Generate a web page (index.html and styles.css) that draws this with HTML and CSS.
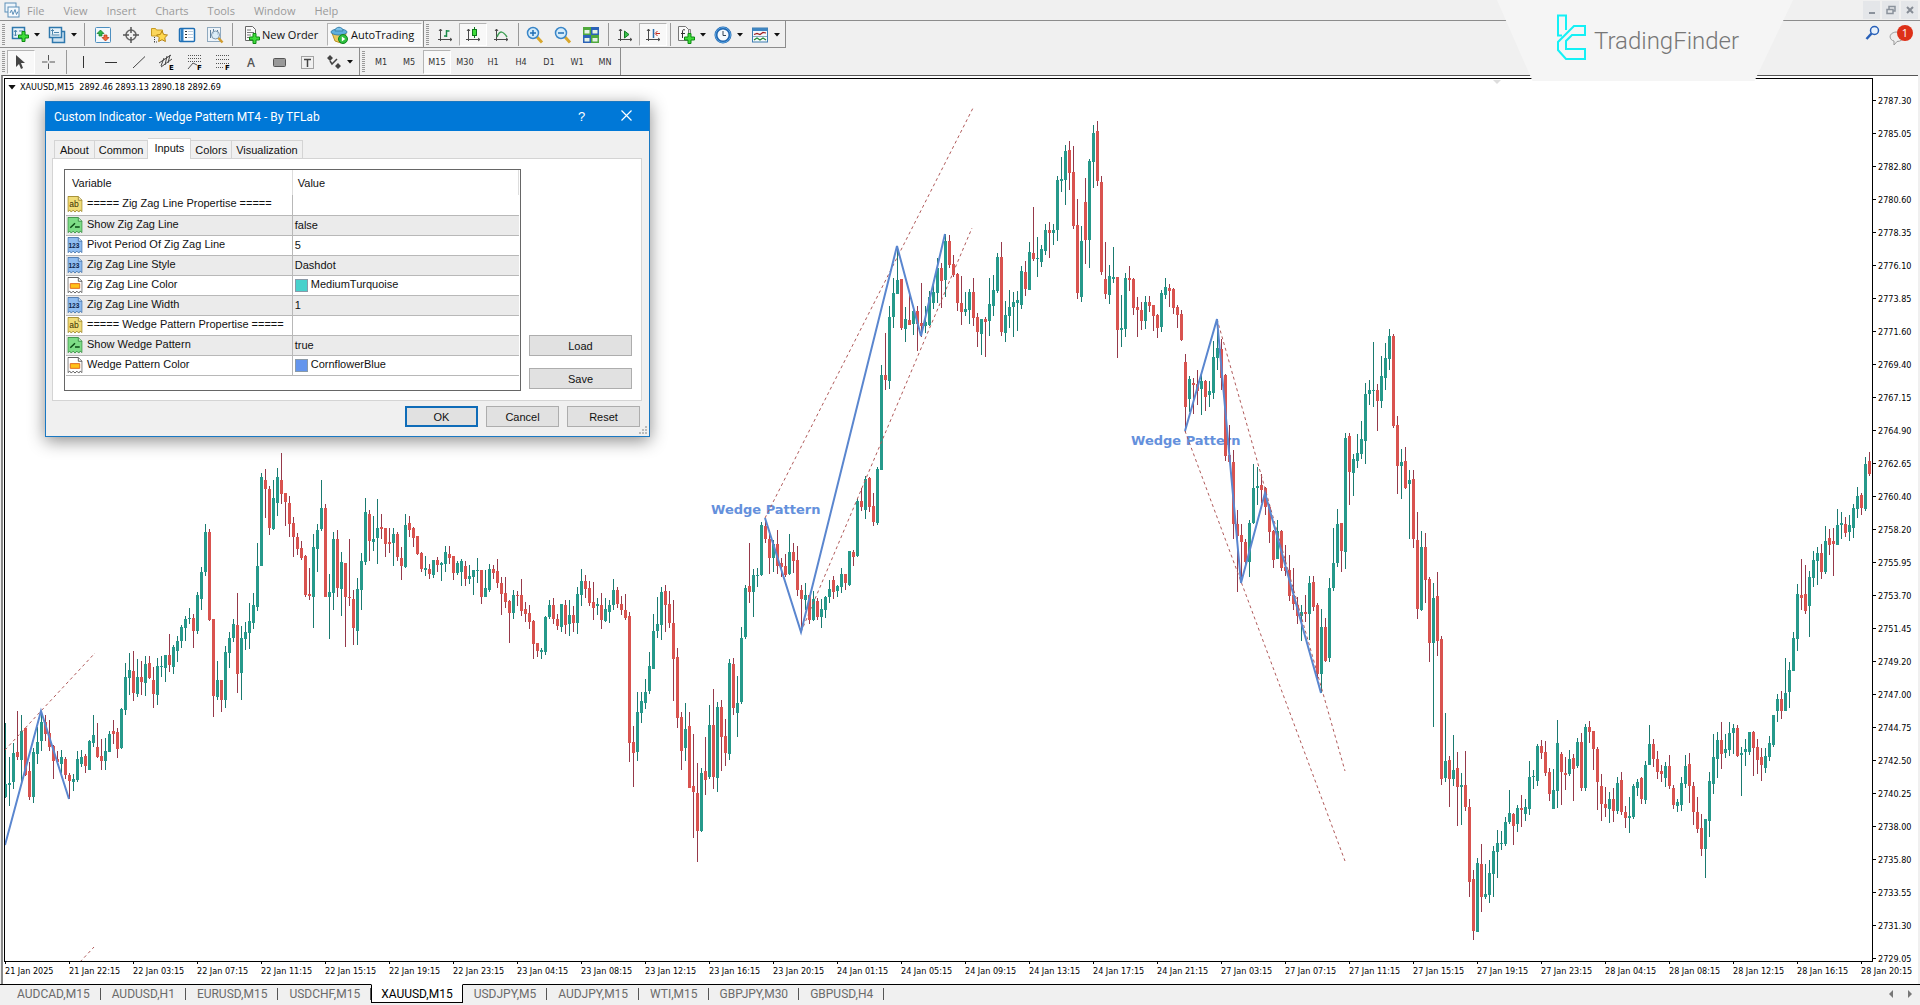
FILE: index.html
```html
<!DOCTYPE html>
<html lang="en">
	<head>
		<meta charset="utf-8">
		<meta name="viewport" content="width=device-width, initial-scale=1.0">
		<title>XAUUSD,M15</title>
		<link rel="stylesheet" href="styles.css">
	</head>
	<body>
		<!-- shared icons -->
		<svg class="defs" width="0" height="0" aria-hidden="true">
			<symbol id="i-drop" viewBox="0 0 6 4"><path d="M0 0h6L3 3.5z" fill="#111"/></symbol>
			<symbol id="i-plus" viewBox="0 0 11 11"><path d="M4 .5h3V4h3.500v3H7v3.500H4V7H.5V4H4z" fill="#3fdc3a" stroke="#0d8a12"/></symbol>
			<symbol id="i-axes" viewBox="0 0 16 16"><path d="M3.500 2v12M1 12.500h14M2 4l1.500-2L5 4M13 11l2 1.500-2 1.500" fill="none" stroke="#4a4a4a"/></symbol>
			<symbol id="i-page" viewBox="0 0 16 18"><path d="M.5.5h11l4 4v12l-2-1.500-1.500 2-2-2-2 2-2-2-2 2-1.500-2-2 1.500z"/><path d="M11.500.5v4h4" fill="#fff" fill-opacity=".6"/></symbol>
			<symbol id="i-ab" viewBox="0 0 16 18"><use href="#i-page" fill="#f0dc78" stroke="#a08a30"/><text x="2" y="12" font-size="9" fill="#3a3000">ab</text></symbol>
			<symbol id="i-bool" viewBox="0 0 16 18"><use href="#i-page" fill="#7ddc86" stroke="#3a8f45"/><path d="M3 11.500l5-5M8 10.500h5" fill="none" stroke="#0b4a14" stroke-width="1.500"/></symbol>
			<symbol id="i-num" viewBox="0 0 16 18"><use href="#i-page" fill="#8fbcf0" stroke="#4a78ac"/><text x="1" y="12" font-size="7" font-weight="bold" fill="#0b2348">123</text></symbol>
			<symbol id="i-col" viewBox="0 0 16 18"><use href="#i-page" fill="#fff" stroke="#555"/><path d="M3 7h10v5H3z" fill="#ffc21a" stroke="#e0661a"/></symbol>
		</svg>

		<nav class="menubar">
			<svg class="app-icon" width="16" height="16" viewBox="0 0 16 16"><rect x="1" y="1" width="11" height="9" fill="#eef5fb" stroke="#5d8fb8"/><rect x="4" y="5" width="11" height="10" fill="#f6fafd" stroke="#5d8fb8"/><path d="M6 11l1.500-3L9 12.500l2-5 1.500 5 1.500-3" fill="none" stroke="#5d8fb8"/></svg>
			<button>File</button>
			<button>View</button>
			<button>Insert</button>
			<button>Charts</button>
			<button>Tools</button>
			<button>Window</button>
			<button>Help</button>
			<div class="window-buttons">
				<button aria-label="Minimize"><svg width="10" height="10" viewBox="0 0 10 10"><path d="M2 8h6" stroke="#8b929c" stroke-width="2"/></svg></button>
				<button aria-label="Restore"><svg width="10" height="10" viewBox="0 0 10 10"><path d="M3 4V1.500h6V6H7M1 4.500h6v4H1z" fill="none" stroke="#8b929c" stroke-width="1.500"/></svg></button>
				<button aria-label="Close"><svg width="10" height="10" viewBox="0 0 10 10"><path d="M2 2l6 6M8 2L2 8" stroke="#868c95" stroke-width="2"/></svg></button>
			</div>
		</nav>

		<div class="toolbar">
			<div class="group">
				<span class="grip"></span>
				<button class="tool drop" aria-label="New chart"><svg width="18" height="18" viewBox="0 0 18 18"><path d="M1.500 1.500h12v11h-12z" fill="#e9f3fa" stroke="#2f78ad" stroke-width="1.500"/><path d="M4.500 4v6M3 6l1.500-2L6 6M3 8.500L4.500 10 6 8.500M8 5h4" fill="none" stroke="#4d86ad"/><use href="#i-plus" x="7" y="5" width="11" height="11"/></svg><svg width="6" height="4"><use href="#i-drop"/></svg></button>
				<button class="tool drop" aria-label="Profiles"><svg width="18" height="18" viewBox="0 0 18 18"><path d="M4.500 5.500h12v11h-12z" fill="#cfe3f2" stroke="#2f78ad" stroke-width="1.500"/><path d="M1.500 1.500h12v10h-12z" fill="#e9f3fa" stroke="#2f78ad" stroke-width="1.500"/><path d="M4.500 3.500v5M3.500 9h8M3 5l1.500-1.500L6 5M6 6.500h5" fill="none" stroke="#4d86ad"/></svg><svg width="6" height="4"><use href="#i-drop"/></svg></button>
				<span class="sep sep-wide"></span>
				<button class="tool" aria-label="Market Watch"><svg width="18" height="18" viewBox="0 0 18 18"><rect x="1.500" y="1.500" width="15" height="15" rx="1" fill="#f2f8fc" stroke="#4d8fc0"/><path d="M3 7.500L6.500 4 10 7.500H8v2.500H5V7.500z" fill="#2db84a" stroke="#0f7a25" stroke-width=".7"/><path d="M8 11.500L11.500 15 15 11.500h-2V9h-3v2.500z" fill="#f26a3c" stroke="#b53312" stroke-width=".7"/></svg></button>
				<button class="tool" aria-label="Data Window"><svg width="18" height="18" viewBox="0 0 18 18"><circle cx="9" cy="9" r="5" fill="none" stroke="#666" stroke-width="1.500"/><path d="M9 1v6M9 11v6M1 9h6M11 9h6" stroke="#555" stroke-width="1.500"/></svg></button>
				<button class="tool" aria-label="Navigator"><svg width="18" height="18" viewBox="0 0 18 18"><path d="M1.500 2.500h4l1 1.500h6v6h-11z" fill="#fbd65c" stroke="#c79a22"/><path d="M4.500 11v5M4 16h4" stroke="#444" stroke-dasharray="1 1"/><path d="M12 5l1.700 3.500 3.800.5-2.700 2.700.6 3.800-3.400-1.800-3.400 1.800.6-3.800L6.500 9l3.800-.5z" fill="#ffd94f" stroke="#b58212"/></svg></button>
				<button class="tool" aria-label="Terminal"><svg width="18" height="18" viewBox="0 0 18 18"><rect x="1.500" y="2.500" width="15" height="13" rx="1" fill="#fff" stroke="#1f6fb5" stroke-width="1.500"/><path d="M4 3v12" stroke="#2f7fc2" stroke-width="3"/><path d="M7 5.500h2M7 8.500h2M7 11.500h2" stroke="#333"/><path d="M10 5.500h5M10 8.500h5M10 11.500h5" stroke="#b9cde0"/></svg></button>
				<button class="tool" aria-label="Strategy Tester"><svg width="18" height="18" viewBox="0 0 18 18"><rect x="1.500" y="1.500" width="13" height="14" fill="#eef4f9" stroke="#8fa9bf"/><path d="M4.500 4v8M7.500 3v5M11.500 4v5" stroke="#5c7f9e"/><circle cx="9.500" cy="9" r="4" fill="#d7ebf7" fill-opacity=".8" stroke="#7f97aa"/><path d="M12.500 12l4 4.500" stroke="#d29c2e" stroke-width="2.500"/></svg></button>
				<span class="sep sep-wide"></span>
				<button class="tool text new-order"><svg width="18" height="18" viewBox="0 0 18 18"><path d="M2.500.5h7l3 3v11h-10z" fill="#fafafa" stroke="#666"/><path d="M4 4h4M4 6.500h7M4 9h4M4 11.500h3" stroke="#777"/><use href="#i-plus" x="6" y="7" width="11" height="11"/></svg>New Order</button>
				<button class="tool text auto pressed"><svg width="18" height="18" viewBox="0 0 18 18"><path d="M2 7l3 8 6 2 4-4 1-6z" fill="#ecc95d" stroke="#b89022"/><ellipse cx="9" cy="6" rx="8" ry="3" fill="#5fb0dd" stroke="#3d83ad"/><path d="M5 5c0-5 8-5 8 0z" fill="#7cc3ea" stroke="#3d83ad"/><circle cx="13" cy="13" r="4.500" fill="#2fbf3f" stroke="#0e8520"/><path d="M11.800 10.500v5l3.500-2.500z" fill="#fff"/></svg>AutoTrading</button>
			</div>
			<div class="group">
				<span class="grip"></span>
				<button class="tool" aria-label="Bar chart"><svg width="16" height="16"><use href="#i-axes"/><path d="M9.500 3v7M9.500 4h3M7 9h2.500" stroke="#1a8a4a" stroke-width="1.500"/></svg></button>
				<button class="tool pressed" aria-label="Candlesticks"><svg width="16" height="16"><use href="#i-axes"/><path d="M9.500 0v11" stroke="#0f7a1c"/><rect x="7.500" y="2.500" width="4" height="6" fill="#3fdc3a" stroke="#0f7a1c"/></svg></button>
				<button class="tool" aria-label="Line chart"><svg width="16" height="16"><use href="#i-axes"/><path d="M4 10c3-7 6-6 10 0" fill="none" stroke="#3f9f55" stroke-width="1.500"/></svg></button>
				<span class="sep"></span>
				<button class="tool" aria-label="Zoom in"><svg width="18" height="18" viewBox="0 0 18 18"><path d="M11 11l5 5.500" stroke="#d9a72c" stroke-width="3"/><circle cx="7" cy="7" r="5.500" fill="#d5ecfa" stroke="#3a86c8" stroke-width="1.500"/><path d="M4 7h6M7 4v6" stroke="#1f6fb5" stroke-width="1.500"/></svg></button>
				<button class="tool" aria-label="Zoom out"><svg width="18" height="18" viewBox="0 0 18 18"><path d="M11 11l5 5.500" stroke="#d9a72c" stroke-width="3"/><circle cx="7" cy="7" r="5.500" fill="#d5ecfa" stroke="#3a86c8" stroke-width="1.500"/><path d="M4 7h6" stroke="#1f6fb5" stroke-width="1.500"/></svg></button>
				<button class="tool" aria-label="Tile windows"><svg width="18" height="18" viewBox="0 0 18 18"><path d="M1 1h8v8H1zM9 9h8v8H9z" fill="#4fa83c"/><path d="M9 1h8v8H9zM1 9h8v8H1z" fill="#2b62b8"/><path d="M2.500 4h5v3.500h-5zM10.500 4h5v3.500h-5zM2.500 12h5v3.500h-5zM10.500 12h5v3.500h-5z" fill="#e6f2e6"/></svg></button>
				<span class="sep"></span>
				<button class="tool" aria-label="Auto scroll"><svg width="16" height="16"><use href="#i-axes"/><path d="M7.500 4v7l4.500-3.500z" fill="#39c04a" stroke="#147a24"/></svg></button>
				<button class="tool pressed" aria-label="Chart shift"><svg width="16" height="16"><use href="#i-axes"/><path d="M8.500 2v9" stroke="#2a6fae" stroke-width="1.500"/><path d="M15 6.500h-4M12.500 4l-2.500 2.500L12.500 9" fill="none" stroke="#c0281a"/></svg></button>
				<span class="sep"></span>
				<button class="tool drop" aria-label="Indicators"><svg width="18" height="18" viewBox="0 0 18 18"><path d="M4.500 3.500h9v11h-9z" fill="#ddd" stroke="#888"/><path d="M1.500.5h7l3 3v11h-10z" fill="#fafafa" stroke="#777"/><path d="M8 4c-2-1-2.500 0-2.500 2v6M4 7.500h4" fill="none" stroke="#333"/><use href="#i-plus" x="7" y="7" width="11" height="11"/></svg><svg width="6" height="4"><use href="#i-drop"/></svg></button>
				<button class="tool drop" aria-label="Periods"><svg width="18" height="18" viewBox="0 0 18 18"><circle cx="9" cy="9" r="7" fill="#f4f9fd" stroke="#1f66b0" stroke-width="3"/><circle cx="9" cy="9" r="7.500" fill="none" stroke="#5aa3e0"/><path d="M9 5v4.500h3" fill="none" stroke="#345"/></svg><svg width="6" height="4"><use href="#i-drop"/></svg></button>
				<button class="tool drop" aria-label="Templates"><svg width="18" height="18" viewBox="0 0 18 18"><rect x="1.500" y="2" width="15" height="14" fill="#f4f9fd" stroke="#3f7db0"/><path d="M1.500 3.500h15" stroke="#3f86c2" stroke-width="3"/><path d="M2 10.500h14" stroke="#8ab"/><path d="M3 8.500l3-1 3 1 3-2 3 .5" fill="none" stroke="#a02020" stroke-width="1.200"/><path d="M3 14l3-2 3 2 3-2 3 2" fill="none" stroke="#208a30" stroke-width="1.200"/></svg><svg width="6" height="4"><use href="#i-drop"/></svg></button>
			</div>
			<div class="status">
				<button aria-label="Search"><svg width="16" height="16" viewBox="0 0 16 16"><circle cx="9.500" cy="5.500" r="4" fill="#e8f1fb" stroke="#2860b8" stroke-width="1.500"/><path d="M6.500 8.500L1.500 14" stroke="#2860b8" stroke-width="2.500"/></svg></button>
				<button class="messages" aria-label="Messages"><svg width="18" height="16" viewBox="0 0 18 16"><path d="M7 2c-8 1-7 8-2 9v4l3-3.500c8 0 9-9-1-9.500z" fill="#eee" stroke="#999"/></svg><span class="badge">1</span></button>
			</div>
		</div>

		<div class="toolbar last">
			<div class="group">
				<span class="grip"></span>
				<button class="tool pressed" aria-label="Cursor"><svg width="16" height="16"><path d="M3 1v12l3-3 2 5 2-1-2-5h4z" fill="#444"/></svg></button>
				<button class="tool" aria-label="Crosshair"><svg width="16" height="16"><path d="M7.500 1v5.500M7.500 9.500V15M1 8h5.500M8.500 8H14" stroke="#555"/></svg></button>
				<span class="sep"></span>
				<button class="tool" aria-label="Vertical line"><svg width="16" height="16"><path d="M8.500 2v12" stroke="#333"/></svg></button>
				<button class="tool" aria-label="Horizontal line"><svg width="16" height="16"><path d="M2 8.500h12" stroke="#333"/></svg></button>
				<button class="tool" aria-label="Trendline"><svg width="16" height="16"><path d="M2 14L14 2.500" stroke="#444"/></svg></button>
				<button class="tool" aria-label="Equidistant channel"><svg width="16" height="17"><path d="M0 9L12 1M2 13L13 5M2 12L5 4M6 11L8 2M9 9l2-8" fill="none" stroke="#444"/><text x="10" y="16" class="tiny">E</text></svg></button>
				<button class="tool" aria-label="Fibonacci fan"><svg width="16" height="17"><path d="M1 1.500h14M1 4.500h14M1 7.500h14" stroke="#555" stroke-dasharray="1 1"/><path d="M1 15l5-6 4 2" fill="none" stroke="#555"/><text x="10" y="16" class="tiny">F</text></svg></button>
				<button class="tool" aria-label="Fibonacci retracement"><svg width="16" height="17"><path d="M1 1.500h13M1 5.500h13M1 9.500h13M1 13.500h8" stroke="#555" stroke-dasharray="1 1"/><text x="10" y="16" class="tiny">F</text></svg></button>
				<button class="tool letter">A</button>
				<button class="tool" aria-label="Rectangle"><svg width="16" height="16"><rect x="2.500" y="4.500" width="12" height="8" rx="1" fill="#999" stroke="#555"/></svg></button>
				<button class="tool" aria-label="Text label"><svg width="16" height="16"><rect x="2.500" y="2.500" width="12" height="12" fill="none" stroke="#555" stroke-dasharray="1 1"/><path d="M5 5.500h7M8.500 5v8" stroke="#444" stroke-width="1.500"/></svg></button>
				<button class="tool drop" aria-label="Arrows"><svg width="16" height="16"><path d="M1 4l3-3 3 3-3 3zM9 12l3-3 3 3-3 3z" fill="#444"/><path d="M4 7l2 3 5-5" fill="none" stroke="#444" stroke-width="1.500"/></svg><svg width="6" height="4"><use href="#i-drop"/></svg></button>
			</div>
			<div class="group">
				<span class="grip"></span>
				<button class="tool tf">M1</button>
				<button class="tool tf">M5</button>
				<button class="tool tf pressed">M15</button>
				<button class="tool tf">M30</button>
				<button class="tool tf">H1</button>
				<button class="tool tf">H4</button>
				<button class="tool tf">D1</button>
				<button class="tool tf">W1</button>
				<button class="tool tf">MN</button>
			</div>
		</div>

		<main class="chart">
			<div class="plot">
				<p class="quote"><svg width="8" height="5" viewBox="0 0 6 4"><use href="#i-drop"/></svg>XAUUSD,M15&nbsp; 2892.46 2893.13 2890.18 2892.69</p>
				<svg class="canvas" id="canvas">
					<g transform="translate(-5 -79)">
						<path d="M1493 80h8l-4 4z" fill="#ddd"/>
						<text class="wedge-name" x="711" y="514">Wedge Pattern</text>
						<text class="wedge-name" x="1131" y="445">Wedge Pattern</text>
						<g id="bars" shape-rendering="crispEdges"></g>
						<g class="trend">
							<path d="M5 750L41 711L95 653"/>
							<path d="M80 962L94 947"/>
							<path d="M765 518L973 108"/>
							<path d="M801 632L972 228"/>
							<path d="M1217 319L1345 771"/>
							<path d="M1185 431L1345 861"/>
						</g>
						<g class="wedge">
							<path d="M5 845L41 711L69 799"/>
							<path d="M765 518L801 632L897 246L921 336L945 234"/>
							<path d="M1185 431L1217 319L1241 583L1265 493L1321 693"/>
						</g>
					</g>
				</svg>
			</div>
			<ol class="prices" id="prices"></ol>
			<ol class="times" id="times"></ol>
		</main>

		<div class="chart-tabs">
			<button>AUDCAD,M15</button>
			<button>AUDUSD,H1</button>
			<button>EURUSD,M15</button>
			<button>USDCHF,M15</button>
			<button class="active">XAUUSD,M15</button>
			<button>USDJPY,M5</button>
			<button>AUDJPY,M15</button>
			<button>WTI,M15</button>
			<button>GBPJPY,M30</button>
			<button>GBPUSD,H4</button>
			<div class="scroll">
				<button aria-label="Scroll left"><svg width="4" height="8"><path d="M4 0v8L0 4z" fill="#777"/></svg></button>
				<button aria-label="Scroll right"><svg width="4" height="8"><path d="M0 0v8l4-4z" fill="#777"/></svg></button>
			</div>
		</div>

		<div class="brand">
			<svg width="31" height="47" viewBox="0 0 31 47"><path d="M6 21.500H2V1.500h8V16M29 12H18L2 28v8l8 9h19V35H10v-8l6-6h13z" fill="none" stroke="#14f0f5" stroke-width="2"/></svg>
			<span>TradingFinder</span>
		</div>

		<section class="dialog" role="dialog" aria-labelledby="dialog-title">
			<header>
				<h1 id="dialog-title">Custom Indicator - Wedge Pattern MT4 - By TFLab</h1>
				<button class="help">?</button>
				<button aria-label="Close"><svg width="11" height="11" viewBox="0 0 11 11"><path d="M.5.5l10 10M10.500.5l-10 10" stroke="#fff" stroke-width="1.200"/></svg></button>
			</header>
			<div class="tabs">
				<button>About</button>
				<button>Common</button>
				<button class="active">Inputs</button>
				<button>Colors</button>
				<button>Visualization</button>
			</div>
			<div class="panel">
				<div class="grid">
					<table>
						<thead>
							<tr><th>Variable</th><th>Value</th></tr>
						</thead>
						<tbody>
							<tr><td><svg><use href="#i-ab"/></svg>===== Zig Zag Line Propertise =====</td><td></td></tr>
							<tr><td><svg><use href="#i-bool"/></svg>Show Zig Zag Line</td><td>false</td></tr>
							<tr><td><svg><use href="#i-num"/></svg>Pivot Period Of Zig Zag Line</td><td>5</td></tr>
							<tr><td><svg><use href="#i-num"/></svg>Zig Zag Line Style</td><td>Dashdot</td></tr>
							<tr><td><svg><use href="#i-col"/></svg>Zig Zag Line Color</td><td><i class="swatch turquoise"></i>MediumTurquoise</td></tr>
							<tr><td><svg><use href="#i-num"/></svg>Zig Zag Line Width</td><td>1</td></tr>
							<tr><td><svg><use href="#i-ab"/></svg>===== Wedge Pattern Propertise =====</td><td></td></tr>
							<tr><td><svg><use href="#i-bool"/></svg>Show Wedge Pattern</td><td>true</td></tr>
							<tr><td><svg><use href="#i-col"/></svg>Wedge Pattern Color</td><td><i class="swatch cornflower"></i>CornflowerBlue</td></tr>
						</tbody>
					</table>
				</div>
				<div class="side">
					<button class="btn">Load</button>
					<button class="btn">Save</button>
				</div>
			</div>
			<footer>
				<button class="btn default">OK</button>
				<button class="btn">Cancel</button>
				<button class="btn">Reset</button>
			</footer>
			<svg class="resize" width="8" height="8"><path d="M6 0h2v2H6zM3 3h2v2H3zM6 3h2v2H6zM0 6h2v2H0zM3 6h2v2H3zM6 6h2v2H6z" fill="#bbb"/></svg>
		</section>

		<script src="chart.js"></script>
	</body>
</html>
```
FILE: styles.css
```css
* {
	box-sizing: border-box;
}
body {
	margin: 0;
	height: 100vh;
	display: flex;
	flex-direction: column;
	overflow: hidden;
	background: #f0f0f0;
	font-family: "Open Sans", sans-serif;
	font-size: 11px;
	color: #111;
}
button {
	margin: 0;
	padding: 0;
	border: none;
	background: none;
	font: inherit;
	color: inherit;
}
ol {
	margin: 0;
	padding: 0;
	list-style: none;
}
.defs {
	display: none;
}

/* menu and toolbars */
.menubar {
	display: flex;
	align-items: center;
	gap: 19px;
	flex: none;
	height: 21px;
	padding-left: 4px;
	border-bottom: 1px solid #8c8c8c;
	color: #9a9a9a;
}
.app-icon {
	margin-right: -12px;
}
.window-buttons {
	display: flex;
	gap: 2px;
	margin-left: auto;
	padding-right: 2px;
}
.window-buttons button {
	width: 17px;
	height: 18px;
	background: #e4e6e9;
}
.toolbar {
	display: flex;
	flex: none;
	height: 27px;
}
.group {
	display: flex;
	border-right: 1px solid #8c8c8c;
	border-bottom: 1px solid #8c8c8c;
	padding-right: 1px;
}
.last .group {
	border-bottom: none;
}
.grip {
	width: 3px;
	margin: 3px 2px 2px;
	background: repeating-linear-gradient(#999 0 1px, transparent 1px 2px);
}
.sep {
	width: 6px;
	margin: 2px 0 1px;
	background: linear-gradient(90deg, transparent 3px, #999 3px 4px, transparent 4px);
}
.sep-wide {
	width: 8px;
}
.tool {
	display: flex;
	align-items: center;
	justify-content: center;
	width: 28px;
	margin: 2px 0 1px;
}
.drop {
	width: 37px;
	gap: 5px;
}
.pressed {
	border: 1px solid #b4b4b4;
	border-right-color: #fff;
	border-bottom-color: #fff;
	background: #f8f8f8;
}
.text {
	justify-content: flex-start;
	font-size: 11px;
}
.new-order {
	width: 90px;
	padding-left: 6px;
	gap: 1px;
}
.auto {
	width: 95px;
	padding-left: 2px;
	gap: 3px;
}
.letter {
	font-weight: 600;
	font-size: 12px;
	color: #555;
}
.tf {
	font-family: "DejaVu Sans Condensed", "DejaVu Sans", sans-serif;
	font-size: 9px;
	color: #333;
}
.tiny {
	font: bold 7px "DejaVu Sans", sans-serif;
}
.status {
	display: flex;
	align-items: center;
	gap: 8px;
	margin-left: auto;
	padding-right: 7px;
}
.messages {
	position: relative;
	width: 24px;
	height: 26px;
	padding-top: 8px;
	text-align: left;
}
.badge {
	position: absolute;
	top: 3px;
	right: 0;
	width: 16px;
	height: 16px;
	border-radius: 8px;
	background: #dd3018;
	color: #fff;
	font-size: 11px;
	line-height: 16px;
	text-align: center;
}

/* chart window */
.chart {
	display: grid;
	grid-template-columns: minmax(0, 1fr) 45px;
	grid-template-rows: minmax(0, 1fr) 22px;
	flex: 1;
	min-height: 0;
	margin: 0 2px 0 1px;
	padding: 2px 0 0 1px;
	border-top: 1px solid #555;
	border-left: 2px solid #888;
	background: #fff;
	font-family: "DejaVu Sans Condensed", "DejaVu Sans", sans-serif;
	font-size: 9px;
	color: #000;
}
.plot {
	position: relative;
	border: 1px solid #000;
}
.canvas {
	display: block;
	width: 100%;
	height: 100%;
}
.quote {
	position: absolute;
	top: 2px;
	left: 3px;
	display: flex;
	align-items: center;
	gap: 4px;
	margin: 0;
	line-height: 12px;
}
.up {
	fill: #26998b;
}
.up .wick {
	fill: #1a7a70;
}
.down {
	fill: #d9534f;
}
.down .wick {
	fill: #96394a;
}
.wedge {
	fill: none;
	stroke: #5a86cf;
	stroke-width: 2;
}
.trend {
	fill: none;
	stroke: #b05a5a;
	stroke-dasharray: 3 3;
}
.wedge-name {
	font: bold 13px "DejaVu Sans", sans-serif;
	fill: #6490dc;
}
.prices {
	padding-top: 6px;
	height: 0;
}
.prices li {
	display: flex;
	align-items: center;
	gap: 2px;
	height: 33px;
}
.prices li::before {
	content: "";
	width: 3px;
	height: 1px;
	background: #000;
}
.times {
	display: flex;
	padding-left: 1px;
}
.times li {
	flex: none;
	width: 64px;
	white-space: nowrap;
	line-height: 14px;
}
.times li::before {
	content: "";
	display: block;
	width: 1px;
	height: 2px;
	background: #000;
}

.chart-tabs {
	display: flex;
	flex: none;
	height: 21px;
	padding: 0 8px 2px 6px;
	border-top: 1px solid #000;
	font-family: Roboto, sans-serif;
	font-size: 12px;
	color: #6a6a6a;
}
.chart-tabs > button {
	position: relative;
	padding: 0 11px;
}
.chart-tabs > button::after {
	content: "";
	position: absolute;
	right: 0;
	top: 3px;
	bottom: 3px;
	width: 1px;
	background: #555;
}
.chart-tabs > .active {
	margin-top: -1px;
	padding: 0 9px;
	border: 1px solid #000;
	border-top-color: #fff;
	background: #fff;
	color: #000;
}
.chart-tabs > .active::after {
	display: none;
}
.scroll {
	display: flex;
	align-items: center;
	gap: 15px;
	margin-left: auto;
}
.scroll button {
	display: flex;
}

.brand {
	position: absolute;
	top: 0;
	right: 127px;
	display: flex;
	align-items: center;
	gap: 7px;
	width: 296px;
	height: 81px;
	padding: 0 0 6px 59px;
	background: #f5f5f5;
	clip-path: polygon(0 0, 100% 0, 87% 100%, 12% 100%);
	font: 300 24px Roboto, sans-serif;
	color: #777;
}
.brand span {
	padding-top: 6px;
}

/* indicator dialog */
.dialog {
	position: absolute;
	left: 45px;
	top: 101px;
	width: 605px;
	border: 1px solid #1a78c2;
	background: #f0f0f0;
	box-shadow: 0 4px 16px rgba(0, 0, 0, .45);
	font-family: "Liberation Sans", sans-serif;
	font-size: 11px;
	color: #111;
}
.dialog header {
	display: flex;
	align-items: center;
	height: 29px;
	padding-left: 8px;
	background: #0078d7;
	color: #fff;
}
.dialog h1 {
	flex: 1;
	margin: 0;
	font: 12px Roboto, sans-serif;
}
.dialog header button {
	width: 45px;
}
.help {
	font-size: 13px;
}
.tabs {
	display: flex;
	align-items: flex-end;
	height: 27px;
	padding-left: 8px;
}
.tabs button {
	height: 18px;
	padding: 1px 4px 0;
	border: 1px solid #d4d4d4;
	border-left: none;
	border-bottom: none;
}
.tabs button:first-child {
	padding: 1px 5px 0;
	border-left: 1px solid #d4d4d4;
}
.tabs .active {
	height: 21px;
	padding: 0 6px 2px;
	margin-bottom: -1px;
	background: #fff;
}
.panel {
	display: flex;
	gap: 8px;
	margin: 0 7px 0 6px;
	padding: 10px 9px 9px 11px;
	border: 1px solid #d4d4d4;
	background: #fff;
}
.grid {
	flex: 1;
	height: 222px;
	padding: 0 1px;
	border: 1px solid #666;
}
.grid table {
	width: 100%;
	table-layout: fixed;
	border-collapse: collapse;
}
.grid th {
	height: 25px;
	padding: 1px 6px 0;
	text-align: left;
	font-weight: normal;
}
.grid th + th {
	padding-left: 5px;
	border-left: 1px solid #ddd;
	border-right: 1px solid #ddd;
}
.grid td {
	height: 20px;
	padding: 0 0 0 1px;
	border-bottom: 1px solid #b8b8b8;
	white-space: nowrap;
}
.grid td + td {
	padding-left: 2px;
	border-left: 1px solid #b8b8b8;
}
.grid tr:nth-child(even) td {
	background: #ebebeb;
}
.grid td svg {
	width: 16px;
	height: 17px;
	margin-right: 4px;
	vertical-align: middle;
}
.swatch {
	display: inline-block;
	width: 13px;
	height: 13px;
	margin-right: 3px;
	border: 1px solid #8a9aa8;
	vertical-align: middle;
}
.turquoise {
	background: mediumturquoise;
}
.cornflower {
	background: cornflowerblue;
}
.side {
	display: flex;
	flex-direction: column;
	justify-content: flex-end;
	gap: 12px;
	width: 103px;
	padding-bottom: 2px;
}
.btn {
	height: 21px;
	border: 1px solid #adadad;
	background: #e1e1e1;
}
.default {
	border: 2px solid #0f6cb8;
}
.dialog footer {
	display: flex;
	justify-content: flex-end;
	gap: 8px;
	padding: 5px 9px 9px;
}
.dialog footer .btn {
	width: 73px;
}
.resize {
	position: absolute;
	right: 2px;
	bottom: 2px;
}
```
FILE: chart.js
```js
// bar = direction, high, body top, body bottom, low (window pixels)
const bars = `
u723,784,797,798 u757,783,785,806 u743,753,782,789 d711,752,757,760 u715,731,760,782 d728,728,775,776 d762,771,797,800 u748,752,797,803 u727,742,754,764 u711,722,741,751
d715,722,734,741 d720,733,747,751 d745,746,761,779 d751,759,762,765 u750,757,764,773 d757,759,775,779 d773,775,781,799 u774,779,782,791 u751,759,780,782 u750,757,764,767
d754,756,766,773 u740,741,770,770 u715,735,743,747 d723,747,757,758 d739,756,761,770 u738,751,761,770 u731,734,752,752 d720,731,734,744 d728,732,749,758 u708,709,748,749
u663,677,710,715 u653,670,678,695 d651,671,693,701 u659,677,694,697 d661,677,682,695 u656,664,683,696 d656,663,678,679 d667,680,694,708 u658,666,695,705 u656,666,667,677
u655,655,668,682 d634,655,665,672 u645,647,667,674 u636,641,651,662 u625,627,641,648 u616,619,628,641 u608,618,619,624 d614,618,631,648 u592,595,631,634 u567,572,599,610
u524,532,572,576 d529,532,620,621 d619,619,696,717 u661,680,697,700 d680,680,700,712 u646,652,700,708 u632,638,653,668 u619,624,638,642 d593,625,674,693 u626,638,673,700
u622,632,639,650 u603,621,633,649 u593,605,623,629 u543,566,607,611 u473,477,566,566 d469,480,489,518 d486,489,528,535 u480,498,529,530 u468,477,503,516 d453,480,494,504
d493,493,502,526 d496,503,524,537 d517,523,537,557 d533,537,549,555 d541,548,558,560 d555,556,595,597 d568,594,596,600 u534,547,597,628 u524,530,549,572 u480,508,529,531
d504,508,597,597 u574,592,597,639 u532,539,593,610 d530,539,588,597 u552,562,589,616 d563,563,597,647 d539,597,598,606 d590,599,628,645 u578,589,631,645 u553,561,590,610
u498,512,562,565 d510,514,541,561 u516,539,542,551 u499,528,538,564 d514,527,529,539 d528,528,544,557 d528,542,544,553 u528,534,543,566 d532,534,557,561 d547,558,566,580
u514,525,567,568 d516,523,530,537 d527,528,538,547 d536,536,554,555 d552,553,569,572 u556,568,570,576 d564,569,574,579 u560,560,575,578 d557,560,565,572 u562,563,565,581
u546,552,564,572 d546,554,558,564 d556,556,573,580 u561,563,573,575 u559,561,572,586 d561,566,579,586 u565,576,579,584 u570,570,577,595 u558,570,571,583 d570,570,597,604
u570,588,597,597 u564,569,590,592 d565,569,573,579 d559,571,583,588 d577,583,594,615 d577,593,602,608 d600,601,613,643 u590,595,613,619 d591,595,596,606 d579,595,611,616
d602,609,614,622 d605,613,622,629 d620,621,644,659 d643,643,651,657 u648,650,652,659 u616,617,652,655 u600,605,617,619 d598,605,619,624 d614,619,626,630 u604,604,627,632
d600,605,625,634 u600,615,624,636 d606,615,623,632 u587,594,623,634 u569,581,595,606 d575,581,589,598 d581,588,603,606 d582,602,608,620 u598,604,606,615 d593,605,620,629
u598,609,621,622 u600,605,612,623 u579,590,605,610 d587,590,604,608 d596,604,610,615 d594,610,618,620 d612,616,743,762 d726,742,753,787 u692,712,752,761 u692,701,713,723
u679,692,703,709 u652,666,691,694 u614,631,669,669 u597,624,631,638 u587,592,625,640 d585,591,605,632 d591,604,623,628 d600,623,659,701 d648,657,718,728 d712,717,751,770
u703,729,748,761 d712,726,788,788 d734,786,792,838 d763,793,831,862 u768,773,831,832 d737,771,780,795 u705,725,777,779 d689,725,777,789 u702,707,778,792 d700,707,737,771
d719,736,753,766 u659,663,754,760 d658,664,708,715 u676,703,713,737 u627,638,702,704 u585,588,637,639 d543,586,592,603 u569,575,592,617 u568,575,576,587 u522,525,575,576
d518,526,539,543 d530,539,558,574 u540,544,558,572 d530,544,566,574 d558,563,567,577 d554,566,575,577 u534,552,574,575 d543,552,561,573 d546,560,590,596 d585,590,599,632
u583,595,600,610 d595,595,620,624 u591,599,620,621 d598,601,617,620 u599,609,617,628 u596,597,610,618 u580,589,597,603 d576,580,592,599 u585,586,591,597 u568,574,587,593
d574,574,583,590 u551,551,585,586 d550,552,557,566 u498,501,556,557 d488,501,507,511 u476,479,510,519 d477,478,507,512 d493,506,522,526 u467,469,523,525 u365,375,470,470
d333,375,380,390 u306,317,381,389 u278,293,317,328 u246,280,294,294 d279,279,328,330 u307,319,329,342 d292,320,325,325 u306,311,324,335 d306,311,324,351 d283,323,326,337
u306,322,326,333 u291,297,325,326 u280,292,303,309 u258,268,293,303 d263,268,281,308 u234,241,280,297 d235,241,265,268 d255,264,275,277 d273,274,303,311 d276,303,312,325
u292,309,312,316 u289,292,310,324 d278,292,318,326 d313,317,332,347 u319,319,334,355 d317,319,322,357 u278,304,321,336 u275,290,306,316 u253,257,291,293 d242,257,332,336
u301,315,333,342 u290,307,316,328 u292,302,307,337 u291,300,303,331 u266,271,305,309 d261,272,289,296 u242,252,290,290 d207,253,259,261 u237,258,259,277 u245,249,262,267
u224,230,251,255 d222,230,233,258 u224,230,233,245 u176,180,230,241 u157,179,181,192 u145,151,180,205 d141,150,173,190 d146,172,226,229 d199,225,293,299 u226,241,297,302
d178,202,240,264 u159,161,240,268 u125,133,162,188 d121,131,181,186 d176,182,272,275 d242,279,294,299 u265,276,295,304 u247,277,279,283 d277,277,330,358 u295,328,330,347
u273,278,329,337 d266,278,280,291 d278,279,308,315 d297,307,310,337 d302,310,321,330 u296,302,321,329 d296,302,306,312 d305,305,316,331 d314,315,328,338 u290,293,327,332
u278,287,295,299 d284,288,291,307 d288,289,308,314 d305,307,315,328 d310,314,340,341 d354,362,407,432 u376,379,399,412 d378,383,385,414 d370,384,391,405 u372,381,389,415
d380,381,397,411 u381,391,395,407 u341,357,393,399 u319,348,358,370 d339,349,378,390 d374,375,456,461 d425,455,462,462 d450,462,524,539 d510,524,536,592 d524,535,542,583
d539,542,562,568 u520,523,562,577 u464,488,523,524 u467,486,488,505 d474,485,490,503 d487,488,507,515 d505,507,532,543 d530,531,560,568 u520,531,559,559 d530,531,568,571
d545,567,571,576 d555,570,596,601 d568,595,604,610 d597,605,616,624 u605,612,616,641 d595,612,614,622 u576,583,614,640 d576,582,607,611 d603,605,674,682 u609,627,674,693
d618,627,661,662 u578,588,658,662 u528,563,588,591 u509,524,563,567 d523,523,551,572 u433,438,552,569 d433,436,472,505 u454,459,473,496 u434,453,461,468 u421,439,454,459
u383,394,441,464 u380,390,394,405 u342,390,391,407 d384,390,401,431 u356,376,401,408 u343,358,378,390 u329,336,359,370 d334,336,426,428 d416,425,466,494 u449,462,466,499
d447,461,488,489 u470,480,484,539 d470,479,539,548 d512,540,609,619 u531,547,610,611 d533,547,580,603 d577,579,643,662 u583,598,643,727 d572,596,641,656 d636,639,779,785
u713,761,778,782 d756,760,779,807 u735,770,779,786 d752,768,787,826 u773,785,787,825 d751,785,807,811 d799,807,882,897 d870,879,931,940 u858,863,932,932 d844,864,897,912
u864,894,897,899 u860,873,895,903 u846,851,874,897 u830,843,852,878 u831,843,844,850 u817,822,844,846 u790,813,822,824 d813,814,826,845 u805,808,824,832 d795,808,810,827
u799,807,814,821 u761,777,809,815 u770,776,777,789 u744,746,781,786 d740,746,753,759 d741,752,773,776 d768,772,794,801 u769,790,809,809 u720,743,791,808 d752,754,772,805
d757,773,775,790 u750,759,774,776 d754,758,769,801 u738,742,766,768 d733,742,788,791 u724,727,788,791 d721,727,732,743 d731,731,749,770 d747,749,782,810 d774,786,804,821
d787,804,808,817 u792,799,809,823 d788,799,811,822 u777,783,811,814 d772,780,812,815 d806,812,818,828 u797,816,818,833 u784,786,817,819 u779,782,788,796 d777,778,799,804
u761,765,800,804 u725,744,765,765 d739,744,759,767 d751,759,772,779 d765,771,774,782 u762,766,778,787 d755,766,786,789 d785,788,805,809 u799,802,806,812 u777,783,805,811
u755,766,784,788 d753,764,786,803 d782,786,812,825 d797,812,829,833 d814,828,849,856 u819,819,849,878 u772,781,821,837 u734,757,784,794 u732,740,759,778 d722,740,754,769
u734,749,753,758 u722,733,750,756 u724,728,733,754 d725,728,756,757 u747,753,755,796 u739,749,752,766 u732,732,752,755 d731,732,748,776 d739,747,760,774 d748,757,765,781
u748,756,768,773 u736,743,757,761 u715,715,745,747 u694,699,711,722 d691,699,711,719 u658,693,711,711 u662,670,692,708 u632,638,671,671 u584,594,639,651 d559,595,598,610
d565,594,611,614 u571,577,606,637 u551,560,578,587 u547,553,561,585 d544,553,572,579 u526,541,572,574 d529,538,545,555 d528,541,544,576 u509,525,545,545 u512,523,525,539
d517,524,533,537 u515,525,532,541 u504,508,528,538 u487,496,509,518 d493,495,508,515 u457,464,509,511 d452,461,474,476
`.trim().split(/\s+/);

const step = 4;
const left = 5;

document.getElementById("bars").innerHTML = bars.map((bar, i) => {
	const [high, top, bottom, low] = bar.slice(1).split(",").map(Number);
	const x = left + i * step;
	return `<g class="${bar[0] == "u" ? "up" : "down"}">` +
		`<rect class="wick" x="${x}" y="${high}" width="1" height="${Math.max(low - high, 1)}"/>` +
		`<rect x="${x - 1}" y="${top}" width="3" height="${Math.max(bottom - top, 1)}"/></g>`;
}).join("");

const prices = "2787.30 2785.05 2782.80 2780.60 2778.35 2776.10 2773.85 2771.60 2769.40 2767.15 2764.90 2762.65 2760.40 2758.20 2755.95 2753.70 2751.45 2749.20 2747.00 2744.75 2742.50 2740.25 2738.00 2735.80 2733.55 2731.30 2729.05";
document.getElementById("prices").innerHTML = prices.split(" ").map(p => `<li>${p}</li>`).join("");

const days = {
	"21 Jan": ["2025", "22:15"],
	"22 Jan": ["03:15", "07:15", "11:15", "15:15", "19:15", "23:15"],
	"23 Jan": ["04:15", "08:15", "12:15", "16:15", "20:15"],
	"24 Jan": ["01:15", "05:15", "09:15", "13:15", "17:15", "21:15"],
	"27 Jan": ["03:15", "07:15", "11:15", "15:15", "19:15", "23:15"],
	"28 Jan": ["04:15", "08:15", "12:15", "16:15", "20:15"]
};
document.getElementById("times").innerHTML = Object.entries(days)
	.flatMap(([day, hours]) => hours.map(h => `<li>${day} ${h}</li>`)).join("");
```
